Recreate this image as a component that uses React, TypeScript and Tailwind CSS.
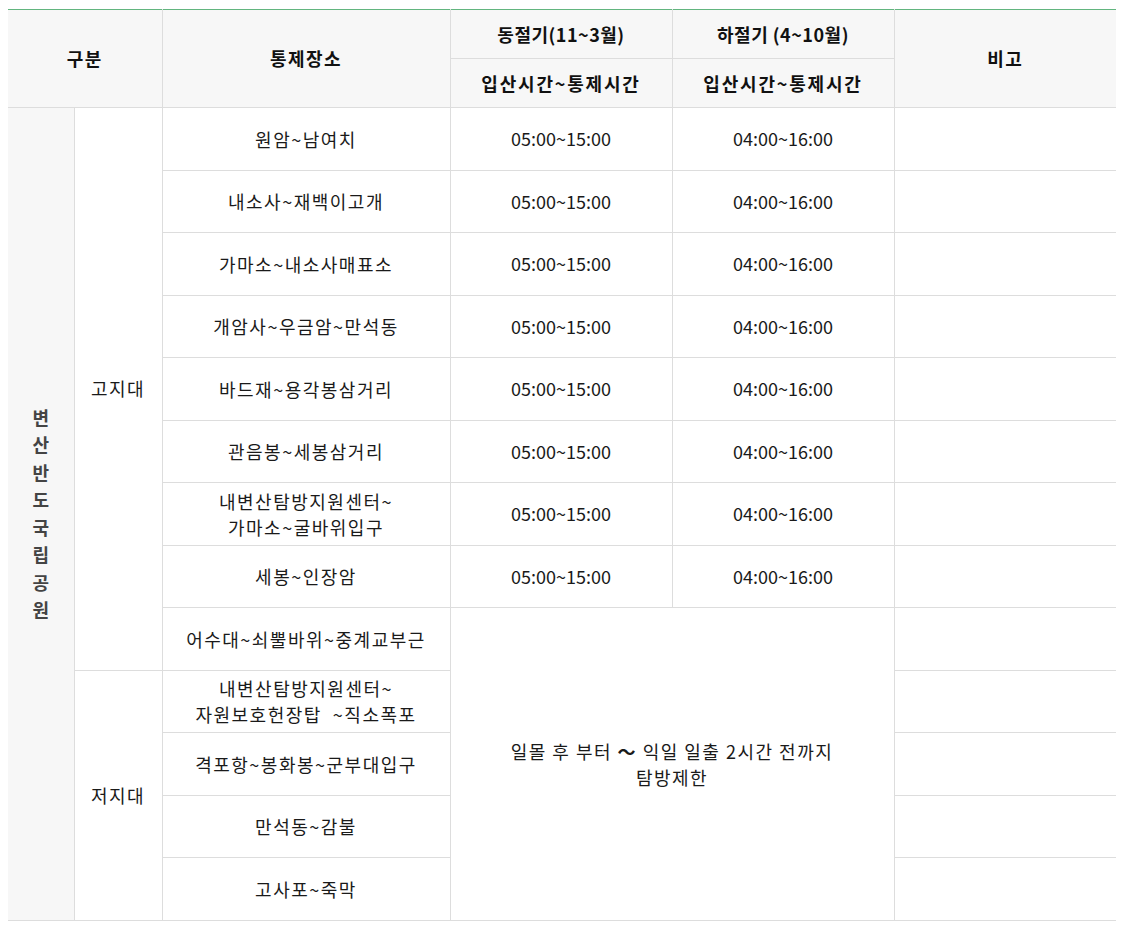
import React from "react";

const rows: { place: React.ReactNode; winter?: string; summer?: string }[] = [
  { place: "원암~남여치", winter: "05:00~15:00", summer: "04:00~16:00" },
  { place: "내소사~재백이고개", winter: "05:00~15:00", summer: "04:00~16:00" },
  { place: "가마소~내소사매표소", winter: "05:00~15:00", summer: "04:00~16:00" },
  { place: "개암사~우금암~만석동", winter: "05:00~15:00", summer: "04:00~16:00" },
  { place: "바드재~용각봉삼거리", winter: "05:00~15:00", summer: "04:00~16:00" },
  { place: "관음봉~세봉삼거리", winter: "05:00~15:00", summer: "04:00~16:00" },
  {
    place: (
      <>
        내변산탐방지원센터~
        <br />
        가마소~굴바위입구
      </>
    ),
    winter: "05:00~15:00",
    summer: "04:00~16:00",
  },
  { place: "세봉~인장암", winter: "05:00~15:00", summer: "04:00~16:00" },
  { place: "어수대~쇠뿔바위~중계교부근" },
  {
    place: (
      <>
        내변산탐방지원센터~
        <br />
        자원보호헌장탑&nbsp; ~직소폭포
      </>
    ),
  },
  { place: "격포항~봉화봉~군부대입구" },
  { place: "만석동~감불" },
  { place: "고사포~죽막" },
];

const cell = "border border-[#dddddd] text-center align-middle p-0";
const ko = "tracking-[1.5px]";

export default function App() {
  return (
    <div
      className="bg-white w-[1144px] h-[935px] pt-[9px] pl-[8px] text-[18px] text-[#1a1a1a]"
      style={{ fontFamily: '"Noto Sans CJK KR", "Noto Sans", sans-serif' }}
    >
      <table className="w-[1108px] border-collapse table-fixed border-t border-t-[#62b57f]">
        <colgroup>
          <col className="w-[66px]" />
          <col className="w-[88px]" />
          <col className="w-[288px]" />
          <col className="w-[222px]" />
          <col className="w-[222px]" />
          <col className="w-[222px]" />
        </colgroup>
        <thead>
          <tr className="h-[49px] bg-[#f7f7f7] font-bold text-[#111]">
            <th colSpan={2} rowSpan={2} className={`${cell} ${ko} border-l-0 border-t-[#62b57f]`}>
              구분
            </th>
            <th rowSpan={2} className={`${cell} ${ko} border-t-[#62b57f]`}>
              통제장소
            </th>
            <th className={`${cell} tracking-[0.5px] border-t-[#62b57f]`}>동절기(11~3월)</th>
            <th className={`${cell} tracking-[0.5px] border-t-[#62b57f]`}>하절기 (4~10월)</th>
            <th rowSpan={2} className={`${cell} ${ko} border-r-0 border-t-[#62b57f]`}>
              비고
            </th>
          </tr>
          <tr className="h-[49px] bg-[#f7f7f7] font-bold text-[#111]">
            <th className={`${cell} tracking-[1.8px]`}>입산시간~통제시간</th>
            <th className={`${cell} tracking-[1.8px]`}>입산시간~통제시간</th>
          </tr>
        </thead>
        <tbody>
          {rows.map((r, i) => (
            <tr key={i} className="h-[62.5px]">
              {i === 0 && (
                <td
                  rowSpan={13}
                  className={`${cell} border-l-0 bg-[#f7f7f7] font-bold text-[#444] leading-[27.5px]`}
                >
                  {"변산반도국립공원".split("").map((c, k) => (
                    <div key={k}>{c}</div>
                  ))}
                </td>
              )}
              {i === 0 && (
                <td rowSpan={9} className={`${cell} ${ko}`}>
                  고지대
                </td>
              )}
              {i === 9 && (
                <td rowSpan={4} className={`${cell} ${ko}`}>
                  저지대
                </td>
              )}
              <td className={`${cell} ${ko} leading-[26px]`}>{r.place}</td>
              {r.winter && <td className={cell}>{r.winter}</td>}
              {r.summer && <td className={cell}>{r.summer}</td>}
              {i === 8 && (
                <td colSpan={2} rowSpan={5} className={`${cell} ${ko} leading-[26px]`}>
                  일몰 후 부터 <span className="font-bold">～</span> 익일 일출 2시간 전까지
                  <br />
                  탐방제한
                </td>
              )}
              <td className={`${cell} border-r-0`}></td>
            </tr>
          ))}
        </tbody>
      </table>
    </div>
  );
}
